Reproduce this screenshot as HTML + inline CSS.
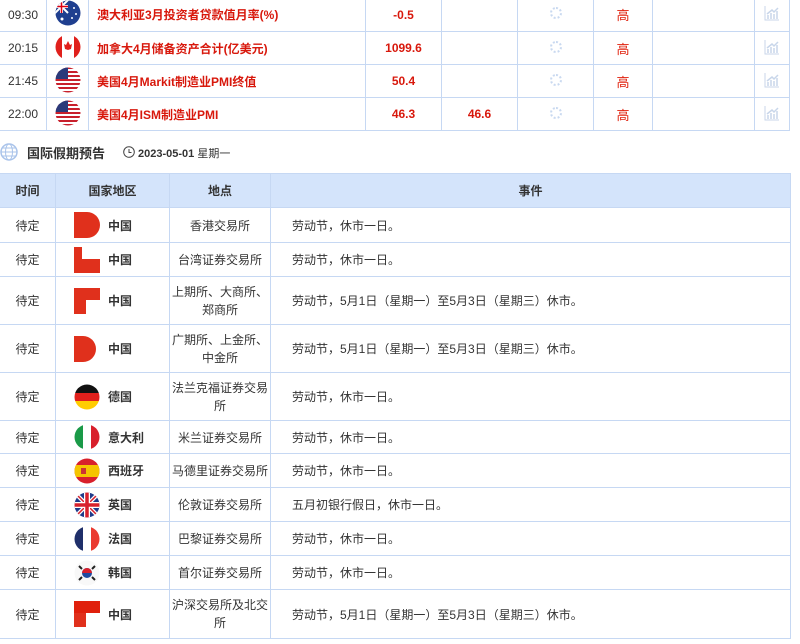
<!DOCTYPE html>
<html><head><meta charset="utf-8"><style>
*{margin:0;padding:0;box-sizing:border-box}
body{width:800px;height:644px;overflow:hidden;background:#fff;font-family:"Liberation Sans","Noto Sans CJK SC",sans-serif;font-size:12px;color:#333;position:relative}
table{border-collapse:collapse;table-layout:fixed;position:absolute}
td,th{border:1px solid #c6d8f3;text-align:center;vertical-align:middle;padding:0}
#t1{left:-1px;top:-3px;width:791px}
#t1 td{height:33px}
.r{color:#d8180c;font-weight:bold}
.ti{color:#d8180c;font-weight:bold;text-align:left;padding-left:8px}
.hi{color:#e0200c;font-size:13px}
#t2{left:-1px;top:173px;width:791px}
#t2 th{background:#d4e4fb;font-weight:bold;height:34px;color:#333}
.ev{text-align:left;padding-left:21px}
.cn{text-align:left;padding-left:18px}
.cn span{display:inline-block;vertical-align:middle}
.cn b{vertical-align:middle;margin-left:8px}
.spin{display:inline-block;width:12px;height:12px;border-radius:50%;border:2px dotted #c9d9f0}
</style></head><body>
<table id="t1">
<colgroup><col style="width:47px"><col style="width:42px"><col style="width:277px"><col style="width:76px"><col style="width:76px"><col style="width:76px"><col style="width:59px"><col style="width:102px"><col style="width:35px"></colgroup>
<tr><td style="height:34px">09:30</td><td><svg width="26" height="26"><clipPath id="c1"><circle cx="13" cy="13" r="12.5"/></clipPath><g clip-path="url(#c1)"><rect width="26" height="26" fill="#1f3f8f"/><rect width="13" height="13" fill="#1f3f8f"/><path d="M0 0L13 13M13 0L0 13" stroke="#fff" stroke-width="2"/><path d="M6.5 0V13M0 6.5H13" stroke="#fff" stroke-width="3"/><path d="M6.5 0V13M0 6.5H13" stroke="#d01" stroke-width="1.5"/><circle cx="19" cy="8" r="1" fill="#fff"/><circle cx="21" cy="14" r="1" fill="#fff"/><circle cx="17" cy="18" r="1" fill="#fff"/><circle cx="7" cy="19" r="1.5" fill="#fff"/></g></svg></td><td class="ti">澳大利亚3月投资者贷款值月率(%)</td><td class="r">-0.5</td><td></td><td><span class="spin"></span></td><td class="hi">高</td><td></td><td><svg width="16" height="16"><path d="M1 1V15H15" stroke="#c8d6ea" fill="none"/><path d="M4 14V10M7 14V8M10 14V9M13 14V6M3 9L8 5L10 7L14 3" stroke="#c8d6ea" fill="none" stroke-width="1.5"/></svg></td></tr>
<tr><td>20:15</td><td><svg width="26" height="26"><clipPath id="c2"><circle cx="13" cy="13" r="12.5"/></clipPath><g clip-path="url(#c2)"><rect width="26" height="26" fill="#fff"/><rect width="7" height="26" fill="#e0201c"/><rect x="19" width="7" height="26" fill="#e0201c"/><path d="M13 7L15 11L17 10L16 15L13 16L10 15L9 10L11 11Z" fill="#e0201c"/></g></svg></td><td class="ti">加拿大4月储备资产合计(亿美元)</td><td class="r">1099.6</td><td></td><td><span class="spin"></span></td><td class="hi">高</td><td></td><td><svg width="16" height="16"><path d="M1 1V15H15" stroke="#c8d6ea" fill="none"/><path d="M4 14V10M7 14V8M10 14V9M13 14V6M3 9L8 5L10 7L14 3" stroke="#c8d6ea" fill="none" stroke-width="1.5"/></svg></td></tr>
<tr><td>21:45</td><td><svg width="26" height="26"><clipPath id="c3"><circle cx="13" cy="13" r="12.5"/></clipPath><g clip-path="url(#c3)"><rect width="26" height="26" fill="#fff"/><path d="M0 1H26M0 5H26M0 9H26M0 13H26M0 17H26M0 21H26M0 25H26" stroke="#c8202c" stroke-width="2"/><rect width="13" height="12" fill="#2b3a7a"/></g></svg></td><td class="ti">美国4月Markit制造业PMI终值</td><td class="r">50.4</td><td></td><td><span class="spin"></span></td><td class="hi">高</td><td></td><td><svg width="16" height="16"><path d="M1 1V15H15" stroke="#c8d6ea" fill="none"/><path d="M4 14V10M7 14V8M10 14V9M13 14V6M3 9L8 5L10 7L14 3" stroke="#c8d6ea" fill="none" stroke-width="1.5"/></svg></td></tr>
<tr><td style="height:32px">22:00</td><td><svg width="26" height="26"><clipPath id="c4"><circle cx="13" cy="13" r="12.5"/></clipPath><g clip-path="url(#c4)"><rect width="26" height="26" fill="#fff"/><path d="M0 1H26M0 5H26M0 9H26M0 13H26M0 17H26M0 21H26M0 25H26" stroke="#c8202c" stroke-width="2"/><rect width="13" height="12" fill="#2b3a7a"/></g></svg></td><td class="ti">美国4月ISM制造业PMI</td><td class="r">46.3</td><td class="r">46.6</td><td><span class="spin"></span></td><td class="hi">高</td><td></td><td><svg width="16" height="16"><path d="M1 1V15H15" stroke="#c8d6ea" fill="none"/><path d="M4 14V10M7 14V8M10 14V9M13 14V6M3 9L8 5L10 7L14 3" stroke="#c8d6ea" fill="none" stroke-width="1.5"/></svg></td></tr>
</table>

<svg style="position:absolute;left:0;top:143px" width="18" height="18"><circle cx="9" cy="9" r="8" fill="none" stroke="#a9c3ea" stroke-width="1.5"/><ellipse cx="9" cy="9" rx="3.5" ry="8" fill="none" stroke="#a9c3ea"/><path d="M1 9H17M2.5 5H15.5M2.5 13H15.5" stroke="#a9c3ea"/></svg>
<div style="position:absolute;left:27px;top:143px;font-size:13px;font-weight:bold;color:#333">国际假期预告</div>
<svg style="position:absolute;left:123px;top:146px" width="12" height="12"><circle cx="6" cy="6" r="5.3" fill="none" stroke="#444"/><path d="M6 3V6.5H8.5" stroke="#444" fill="none"/></svg>
<div style="position:absolute;left:138px;top:145px;font-size:11px;font-weight:bold;color:#333">2023-05-01 <span style="font-weight:normal">星期一</span></div>

<table id="t2">
<colgroup><col style="width:56px"><col style="width:114px"><col style="width:101px"><col style="width:520px"></colgroup>
<tr><th>时间</th><th>国家地区</th><th>地点</th><th>事件</th></tr>
<tr style="height:35px"><td>待定</td><td class="cn"><span style="width:26px;height:26px;background:#e0301c;border-radius:0 13px 13px 0"></span><b>中国</b></td><td>香港交易所</td><td class="ev">劳动节，休市一日。</td></tr>
<tr style="height:34px"><td>待定</td><td class="cn"><span style="width:26px;height:26px;background:linear-gradient(#e0301c 0 0) 0 0/8px 100% no-repeat,linear-gradient(#e0301c 0 0) 0 12px/100% 14px no-repeat"></span><b>中国</b></td><td>台湾证券交易所</td><td class="ev">劳动节，休市一日。</td></tr>
<tr style="height:48px"><td>待定</td><td class="cn"><span style="width:26px;height:26px;background:linear-gradient(#e0301c 0 0) 0 0/100% 12px no-repeat,linear-gradient(#e0301c 0 0) 0 0/12px 100% no-repeat"></span><b>中国</b></td><td style="line-height:18px">上期所、大商所、<br>郑商所</td><td class="ev">劳动节，5月1日（星期一）至5月3日（星期三）休市。</td></tr>
<tr style="height:48px"><td>待定</td><td class="cn"><span style="width:22px;height:26px;background:#e0301c;border-radius:0 13px 13px 0"></span><b style="margin-left:12px">中国</b></td><td style="line-height:18px">广期所、上金所、<br>中金所</td><td class="ev">劳动节，5月1日（星期一）至5月3日（星期三）休市。</td></tr>
<tr style="height:48px"><td>待定</td><td class="cn"><svg width="26" height="26" style="vertical-align:middle"><clipPath id="d1"><circle cx="13" cy="13" r="12.5"/></clipPath><g clip-path="url(#d1)"><rect width="26" height="9" fill="#111"/><rect y="9" width="26" height="8" fill="#e0201c"/><rect y="17" width="26" height="9" fill="#ffcc00"/></g></svg><b>德国</b></td><td style="line-height:18px">法兰克福证券交易<br>所</td><td class="ev">劳动节，休市一日。</td></tr>
<tr style="height:33px"><td>待定</td><td class="cn"><svg width="26" height="26" style="vertical-align:middle"><clipPath id="d2"><circle cx="13" cy="13" r="12.5"/></clipPath><g clip-path="url(#d2)"><rect width="9" height="26" fill="#1a9a48"/><rect x="9" width="8" height="26" fill="#fff"/><rect x="17" width="9" height="26" fill="#d8202c"/></g></svg><b>意大利</b></td><td>米兰证券交易所</td><td class="ev">劳动节，休市一日。</td></tr>
<tr style="height:34px"><td>待定</td><td class="cn"><svg width="26" height="26" style="vertical-align:middle"><clipPath id="d3"><circle cx="13" cy="13" r="12.5"/></clipPath><g clip-path="url(#d3)"><rect width="26" height="26" fill="#d8202c"/><rect y="7" width="26" height="12" fill="#f5c400"/><rect x="7" y="10" width="5" height="6" fill="#c33"/></g></svg><b>西班牙</b></td><td>马德里证券交易所</td><td class="ev">劳动节，休市一日。</td></tr>
<tr style="height:34px"><td>待定</td><td class="cn"><svg width="26" height="26" style="vertical-align:middle"><clipPath id="d4"><circle cx="13" cy="13" r="12.5"/></clipPath><g clip-path="url(#d4)"><rect width="26" height="26" fill="#1f3a8a"/><path d="M0 0L26 26M26 0L0 26" stroke="#fff" stroke-width="4"/><path d="M0 0L26 26M26 0L0 26" stroke="#d8202c" stroke-width="1.5"/><path d="M13 0V26M0 13H26" stroke="#fff" stroke-width="6"/><path d="M13 0V26M0 13H26" stroke="#d8202c" stroke-width="3.5"/></g></svg><b>英国</b></td><td>伦敦证券交易所</td><td class="ev">五月初银行假日，休市一日。</td></tr>
<tr style="height:34px"><td>待定</td><td class="cn"><svg width="26" height="26" style="vertical-align:middle"><clipPath id="d5"><circle cx="13" cy="13" r="12.5"/></clipPath><g clip-path="url(#d5)"><rect width="9" height="26" fill="#1f2f6a"/><rect x="9" width="8" height="26" fill="#fff"/><rect x="17" width="9" height="26" fill="#ea3a30"/></g></svg><b>法国</b></td><td>巴黎证券交易所</td><td class="ev">劳动节，休市一日。</td></tr>
<tr style="height:34px"><td>待定</td><td class="cn"><svg width="26" height="26" style="vertical-align:middle"><circle cx="13" cy="13" r="12.5" fill="#f8f8f8"/><circle cx="13" cy="13" r="5" fill="#1f4aa0"/><path d="M8 13A5 5 0 0 1 18 13Z" fill="#d8202c"/><path d="M5 6L8 9M18 9L21 6M5 20L8 17M18 17L21 20" stroke="#222" stroke-width="2"/></svg><b>韩国</b></td><td>首尔证券交易所</td><td class="ev">劳动节，休市一日。</td></tr>
<tr style="height:49px"><td>待定</td><td class="cn"><span style="width:26px;height:26px;background:linear-gradient(#e0200c 0 0) 0 0/100% 12px no-repeat,linear-gradient(#e0301c 0 0) 0 0/12px 100% no-repeat"></span><b>中国</b></td><td style="line-height:18px">沪深交易所及北交<br>所</td><td class="ev">劳动节，5月1日（星期一）至5月3日（星期三）休市。</td></tr>
</table>
</body></html>
